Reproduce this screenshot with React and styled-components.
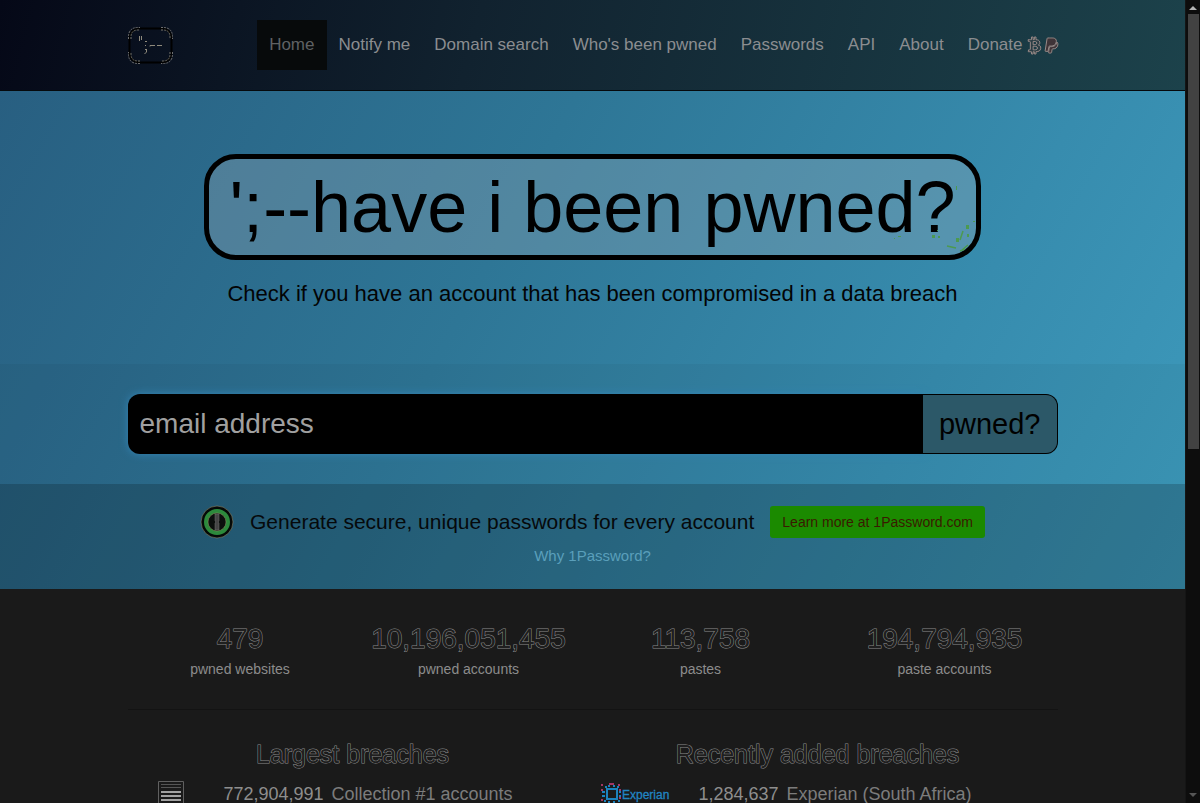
import styled, { createGlobalStyle, css } from 'styled-components'
import { FaBtc, FaPaypal } from 'react-icons/fa'

const links = ['Home', 'Notify me', 'Domain search', "Who's been pwned", 'Passwords', 'API', 'About']

const stats = [
  { value: '479', label: 'pwned websites' },
  { value: '10,196,051,455', label: 'pwned accounts' },
  { value: '113,758', label: 'pastes' },
  { value: '194,794,935', label: 'paste accounts' }
]

export default function App() {
  return (
    <>
      <GlobalStyle />
      <Shell>
        <Page>
          <Header />
          <Banner>
            <Hero />
            <Search />
            <Promo />
          </Banner>
          <Container>
            <Stats>
              {stats.map(({ value, label }) => (
                <Stat key={label}>
                  <StatValue>{value}</StatValue>
                  <StatLabel>{label}</StatLabel>
                </Stat>
              ))}
            </Stats>
            <Divider />
            <Breaches>
              <BreachList title="Largest breaches" logo={<ListLogo />} count="772,904,991" name="Collection #1 accounts" countWidth={109} />
              <BreachList title="Recently added breaches" logo={<ExperianLogo />} count="1,284,637" name="Experian (South Africa)" countWidth={99} />
            </Breaches>
          </Container>
        </Page>
        <Scrollbar aria-hidden="true">
          <Arrow viewBox="0 0 8 4"><path d="M0 4L4 0L8 4Z" fill="#b5b5b5" /></Arrow>
          <Thumb />
          <Arrow viewBox="0 0 8 4"><path d="M0 0L4 4L8 0Z" fill="#555" /></Arrow>
        </Scrollbar>
      </Shell>
    </>
  )
}

function Header() {
  return (
    <Bar>
      <BarInner>
        <Brand href="#" aria-label="Home page">
          <svg width="45" height="37" viewBox="0 0 45 37" fill="none">
            <rect x="1.500" y="1.500" width="42" height="34" rx="9.500" stroke="#000" strokeWidth="2" />
            <path d="M0.500 12v-2Q0.500 0.500 10 0.500h2M33 0.500h2Q44.500 0.500 44.500 10v2M44.500 25v2Q44.500 36.500 35 36.500h-2M12 36.500h-2Q0.500 36.500 0.500 27v-2" stroke="#6f6f6f" strokeDasharray="2 1" />
            <path d="M3 12v-2Q3 3 10 3h2M33 3h2Q42 3 42 10v2M42 25v2Q42 34 35 34h-2M12 34h-2Q3 34 3 27v-2" stroke="#77756c" strokeDasharray="2 1" />
            <path d="M11.500 9v5M13.500 9v4M17 14.500h2M17 18.500h1M17 22.500h2M18.500 23v2l-2 2M22 19.500v-1h5M29 18.500h5" stroke="#8f8a7c" />
          </svg>
        </Brand>
        <nav>
          <Menu>
            {links.map(link => (
              <li key={link}><MenuLink href="#" $active={link === 'Home'}>{link}</MenuLink></li>
            ))}
            <li>
              <MenuLink href="#">
                Donate
                <MenuIcons>
                  <FaBtc />
                  <FaPaypal />
                </MenuIcons>
              </MenuLink>
            </li>
          </Menu>
        </nav>
      </BarInner>
    </Bar>
  )
}

function Hero() {
  return (
    <HeroSection>
      <Title>
        {"';--have i been pwned?"}
        <Splatter viewBox="0 0 100 70" aria-hidden="true">
          <path d="M87 46l-3 9M71 61l9 2M92 60l-6 5M84 66l5-2" stroke="#4c9a50" strokeWidth="1.500" />
          <path d="M90 40h3v4h-3zM80 53h3v4h-3zM56 50h3v3h-3zM62 51h2v2h-2zM91 49h2v3h-2zM97 36h2v1h-2zM80 1h1v4h-1zM61 45h1v1h-1zM22 51h3v1h-3zM18 53h1v1h-1z" fill="#4c9a50" />
        </Splatter>
      </Title>
      <Lead>Check if you have an account that has been compromised in a data breach</Lead>
    </HeroSection>
  )
}

function Search() {
  return (
    <SearchSection>
      <Container>
        <SearchForm onSubmit={e => e.preventDefault()}>
          <SearchInput type="email" placeholder="email address" aria-label="email address" />
          <SearchButton type="submit">pwned?</SearchButton>
        </SearchForm>
      </Container>
    </SearchSection>
  )
}

function Promo() {
  return (
    <PromoSection>
      <PromoRow>
        <svg width="34" height="34" viewBox="0 0 34 34" aria-hidden="true">
          <circle cx="17" cy="17" r="16" fill="#050a08" stroke="#8c8a70" strokeWidth="0.6" />
          <circle cx="17" cy="17" r="11" fill="#0a0f0c" stroke="#2c8a3c" strokeWidth="4" />
          <circle cx="17" cy="17" r="9" fill="#0b0f0d" stroke="#8a9060" strokeWidth="0.6" />
          <path d="M15 9h4v7l-1 1 1 1v7h-4v-7l1-1-1-1z" fill="#444" stroke="#707070" strokeWidth="0.5" />
        </svg>
        <PromoText>Generate secure, unique passwords for every account</PromoText>
        <PromoButton href="#">Learn more at 1Password.com</PromoButton>
      </PromoRow>
      <PromoLink href="#">Why 1Password?</PromoLink>
    </PromoSection>
  )
}

function BreachList({ title, logo, count, name, countWidth }) {
  return (
    <Breach>
      <BreachTitle>{title}</BreachTitle>
      <BreachTable>
        <tbody>
          <tr>
            <LogoCell>{logo}</LogoCell>
            <CountCell $width={countWidth}>{count}</CountCell>
            <NameCell><NameLink href="#">{name}</NameLink></NameCell>
          </tr>
        </tbody>
      </BreachTable>
    </Breach>
  )
}

function ListLogo() {
  return (
    <svg width="28" height="28" viewBox="0 0 28 28" aria-hidden="true">
      <path d="M1.500 28V1.500H26.500V28" fill="none" stroke="#606060" />
      <path d="M4 4.500h20M4 7.500h20" stroke="#555" />
      <path d="M4 12h20M4 16h20M4 20h20M4 24h20" stroke="#a2a2a2" strokeWidth="2" />
    </svg>
  )
}

function ExperianLogo() {
  return (
    <svg width="72" height="24" viewBox="0 0 72 24" role="img" aria-label="Experian">
      <path d="M6 6h12v12H6zM8 8v8h8V8z" fill="#1c82bd" fillRule="evenodd" />
      <path d="M8 3h2v2H8zM13 3h2v2h-2zM2 9h3v2H2zM2 13h3v2H2zM19 9h2v2h-2zM19 13h2v2h-2zM8 19h2v2H8zM13 19h2v2h-2zM5 4h2v2H5zM17 4h2v2h-2zM4 18h2v2H4zM18 18h2v2h-2z" fill="#1c82bd" />
      <path d="M1 2h2v2H1zM9 1h5v2H9zM18 2h2v2h-2zM19 7h2v2h-2zM19 15h2v2h-2zM1 7h2v2H1zM1 17h2v2H1z" fill="#a33663" />
      <text x="22" y="17" fontSize="12" fill="#2185c2" stroke="#2185c2" strokeWidth="0.3">Experian</text>
    </svg>
  )
}

const GlobalStyle = createGlobalStyle`
  *, *::before, *::after {
    box-sizing: border-box;
  }

  body {
    margin: 0;
    background: #1a1a1a;
    font-family: "Liberation Sans", Arial, sans-serif;
    font-size: 14px;
    line-height: 20px;
    color: #8a8a8a;
  }

  a {
    text-decoration: none;
  }
`

// hollow lettering: dark inside, lighter contour
const hollow = css`
  color: #1f1f1f;
  -webkit-text-stroke: 1px #8c8c8c;
  paint-order: stroke fill;
`

const Shell = styled.div`
  display: grid;
  grid-template-columns: minmax(0, 1fr) 15px;
  height: 100vh;
  overflow: hidden;
`

const Page = styled.div`
  min-width: 0;
  overflow: hidden;
`

const Scrollbar = styled.div`
  display: flex;
  flex-direction: column;
  align-items: center;
  padding: 6px 0;
  background: #0d0d0d;
  border-left: 1px solid #151515;
`

const Thumb = styled.div`
  width: 11px;
  flex: 0 0 55%;
  margin: 4px 0 auto;
  background: #424242;
`

const Arrow = styled.svg`
  width: 8px;
  height: 4px;
`

const Container = styled.div`
  max-width: 960px;
  margin: 0 auto;
  padding: 0 15px;
`

const Bar = styled.header`
  background: linear-gradient(105deg, #050817 0%, #11222f 40%, #1c424b 100%);
  border-bottom: 1px solid #05090c;
`

const BarInner = styled(Container)`
  display: flex;
  justify-content: space-between;
  align-items: center;
  height: 90px;
  padding-right: 0;
`

const Brand = styled.a`
  display: flex;
`

const Menu = styled.ul`
  display: flex;
  margin: 0;
  padding: 0 2px 0 0;
  list-style: none;
`

const MenuLink = styled.a`
  display: flex;
  align-items: center;
  gap: 4px;
  padding: 0 12px;
  font-size: 17px;
  line-height: 50px;
  white-space: nowrap;
  color: ${({ $active }) => $active ? '#5f6163' : '#8b8d90'};
  background: ${({ $active }) => $active ? '#070a0b' : 'transparent'};
`

const MenuIcons = styled.span`
  display: flex;
  gap: 2px;

  svg {
    width: 15px;
    height: 17px;
    fill: #2b3d44;
    stroke: #998a88;
    stroke-width: 30px;
    overflow: visible;
  }

  svg + svg {
    fill: #3f3438;
  }
`

const Banner = styled.div`
  background: linear-gradient(118deg, #285f81 0%, #2e7696 40%, #378cae 75%, #3d9abc 100%);
`

const HeroSection = styled.section`
  display: flex;
  flex-direction: column;
  align-items: center;
  padding: 63px 15px 56px;
`

const Title = styled.h1`
  position: relative;
  margin: 0;
  padding: 0 20px;
  border: 5px solid #000;
  border-radius: 32px;
  background: rgba(155, 170, 185, 0.32);
  font-size: 72px;
  font-weight: 400;
  line-height: 96px;
  color: #000;
`

const Splatter = styled.svg`
  position: absolute;
  right: 0;
  bottom: 0;
  width: 100px;
  height: 70px;
  fill: none;
`

const Lead = styled.p`
  margin: 20px 0 0;
  font-size: 22px;
  line-height: 28px;
  color: #030405;
`

const SearchSection = styled.section`
  padding: 30px 0;
  background: rgba(0, 0, 0, 0.04);
`

const SearchForm = styled.form`
  display: flex;
  height: 60px;
`

const SearchInput = styled.input`
  flex: 1;
  min-width: 0;
  padding: 0 12px;
  border: 0;
  border-radius: 12px 0 0 12px;
  background: #000;
  box-shadow: 0 0 9px #3484b4;
  font: 28px "Liberation Sans", Arial, sans-serif;
  color: #aaa;
  outline: none;

  &::placeholder {
    color: #a0a0a0;
    opacity: 1;
  }
`

const SearchButton = styled.button`
  padding: 0 16px;
  border: 1px solid #000;
  border-left: 0;
  border-radius: 0 12px 12px 0;
  background: #2c5868;
  font: 29px "Liberation Sans", Arial, sans-serif;
  color: #000;
`

const PromoSection = styled.section`
  display: flex;
  flex-direction: column;
  align-items: center;
  gap: 7px;
  padding: 21px 15px 23px;
  background: rgba(0, 0, 0, 0.22);
`

const PromoRow = styled.div`
  display: flex;
  align-items: center;
  gap: 16px;
`

const PromoText = styled.span`
  font-size: 21px;
  line-height: 34px;
  color: #06090b;
`

const PromoButton = styled.a`
  padding: 0 12px;
  border-radius: 3px;
  background: #1b8a00;
  font-size: 14px;
  line-height: 32px;
  color: #3a1a00;
`

const PromoLink = styled.a`
  font-size: 15px;
  line-height: 20px;
  color: #5a9fbb;
`

const Stats = styled.div`
  display: grid;
  grid-template-columns: 225fr 232fr 232fr 256fr;
  margin-right: -15px;
  padding: 30px 0;
  text-align: center;
`

const Stat = styled.div`
  display: flex;
  flex-direction: column;
`

const StatValue = styled.span`
  ${hollow}
  font-size: 28px;
  line-height: 40px;
`

const StatLabel = styled.span`
  font-size: 14px;
  line-height: 20px;
  color: #8c8c8c;
`

const Divider = styled.hr`
  height: 1px;
  margin: 0;
  border: 0;
  background: #131313;
`

const Breaches = styled.div`
  display: grid;
  grid-template-columns: 1fr 1fr;
  padding-top: 28px;
`

const Breach = styled.section`
  padding-right: 15px;
`

const BreachTitle = styled.h2`
  ${hollow}
  margin: 0;
  font-size: 25px;
  font-weight: 400;
  line-height: 32px;
  text-align: center;
`

const BreachTable = styled.table`
  width: 100%;
  margin-top: 8px;
  border-collapse: collapse;
  font-size: 18px;
  line-height: 32px;

  td {
    padding: 0;
    vertical-align: middle;
  }
`

const LogoCell = styled.td`
  width: 87px;
  text-align: center;

  svg {
    display: block;
    margin: 0 auto;
    font-family: "Liberation Sans", Arial, sans-serif;
  }
`

const CountCell = styled.td`
  width: ${({ $width }) => $width}px;
  text-align: right;
  color: #8e8e8e;
`

const NameCell = styled.td`
  text-indent: 8px;
`

const NameLink = styled.a`
  color: #7c7c7c;
`
